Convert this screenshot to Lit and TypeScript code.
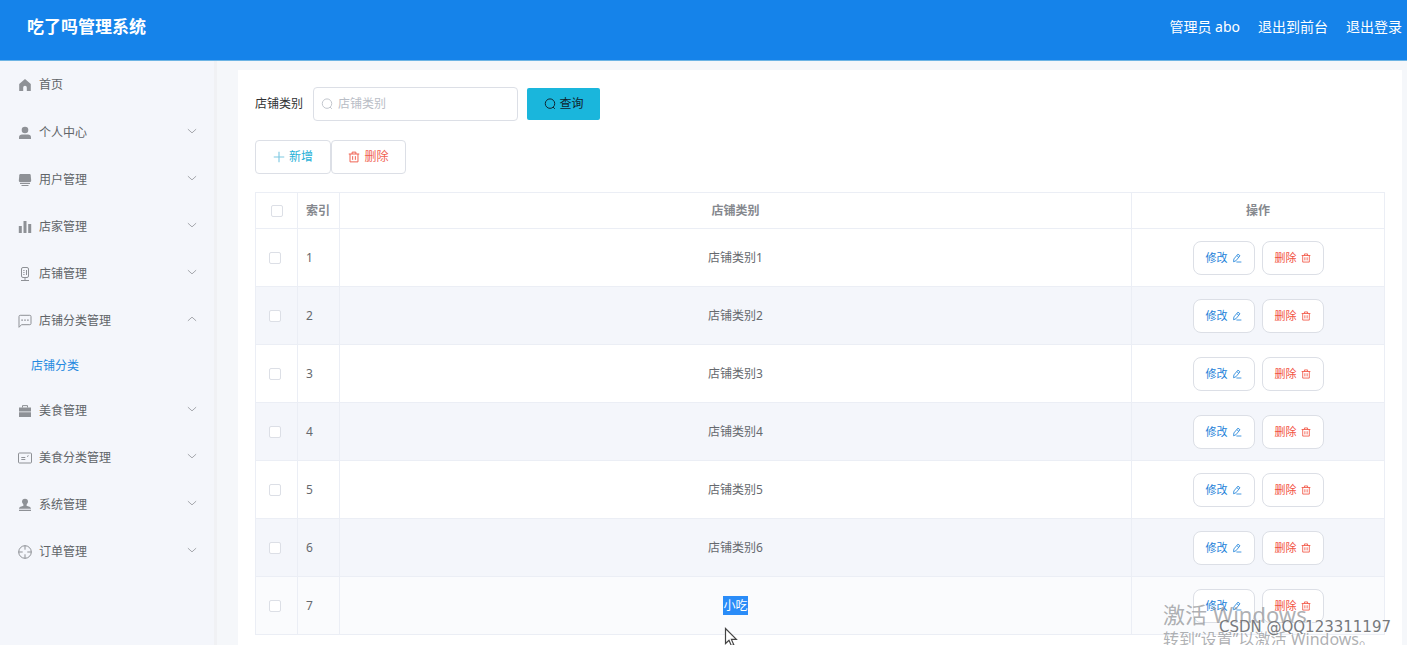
import { LitElement, html, css, svg, nothing } from "lit";
import { customElement, property, state } from "lit/decorators.js";
import { classMap } from "lit/directives/class-map.js";

const glyphs: Record<string, unknown> = {
  home: svg`<path d="M8 2 2.200 7v7h4v-3.400a1.800 1.800 0 0 1 3.600 0V14h4V7z" fill="currentColor"/>`,
  user: svg`<circle cx="8" cy="5" r="3.3" fill="currentColor"/><path d="M2 14v-1.600C2 10.500 3.400 9.600 5 9.600h6c1.600 0 3 .9 3 2.800V14z" fill="currentColor"/>`,
  goods: svg`<path d="M3.600 2h8.800c.8 0 1.200.4 1.300 1.200L14.200 8.500c0 1-.6 1.700-1.600 1.700H3.400c-1 0-1.600-.7-1.600-1.700l.5-5.300C2.400 2.400 2.800 2 3.600 2z" fill="currentColor"/><path d="M3 11.100h10v1H3zM4.500 13h7v1h-7z" fill="currentColor"/>`,
  bars: svg`<path d="M1.800 7h3v7h-3zM6.500 2h3v12h-3zM11.200 5h3v9h-3z" fill="currentColor"/>`,
  mic: svg`<rect x="4.500" y="1.500" width="7" height="10" rx="1.500" fill="none" stroke="currentColor"/><path d="M8 12v2.500M4 14.500h8M6.300 4.500h1.200M6.300 6.500h1.200M6.300 8.500h1.200M9.500 4v5" fill="none" stroke="currentColor"/>`,
  chat: svg`<path d="M2 14.300V3.500c0-.8.500-1.200 1.200-1.200h9.600c.8 0 1.200.5 1.200 1.200v7c0 .8-.5 1.200-1.200 1.200H4.500z" fill="none" stroke="currentColor"/><path d="M4.300 6.500h1.600v1.200H4.300zM7.200 6.500h1.600v1.200H7.200zM10.100 6.500h1.600v1.200h-1.600z" fill="currentColor"/>`,
  bag: svg`<path d="M5.500 4.500V2.600h5v1.900" fill="none" stroke="currentColor"/><path d="M2 4.500h12v4H2zM2 9.300h12V14H2z" fill="currentColor"/>`,
  card: svg`<rect x="1.500" y="3" width="13" height="10" rx="1" fill="none" stroke="currentColor"/><path d="M4.300 7.500h4M4.300 9.500h4M10 6.500l1.600-.8" fill="none" stroke="currentColor"/>`,
  stamp: svg`<path d="M8 1.800a3 3 0 0 1 3 3c0 1.500-1.500 2-1.500 3.700 0 .8 4.500.8 4.500 3.200H2c0-2.400 4.500-2.400 4.500-3.200C6.500 6.800 5 6.300 5 4.800a3 3 0 0 1 3-3zM2 12.700h12v1.200H2z" fill="currentColor"/>`,
  aim: svg`<circle cx="8" cy="8" r="6.300" fill="none" stroke="currentColor"/><path d="M8 1.700v4M8 10.300v4M1.700 8h4M10.300 8h4" fill="none" stroke="currentColor"/>`,
  down: svg`<path d="M2.500 5.500 8 10.500l5.500-5" fill="none" stroke="currentColor" stroke-width="1.300"/>`,
  up: svg`<path d="M2.500 10.500 8 5.500l5.500 5" fill="none" stroke="currentColor" stroke-width="1.300"/>`,
  search: svg`<circle cx="8" cy="7.500" r="6.300" fill="none" stroke="currentColor" stroke-width="1.300"/><path d="m12 12 2.500 2.500" stroke="currentColor" stroke-width="1.300"/>`,
  plus: svg`<path d="M8 1v14M1 8h14" stroke="currentColor" stroke-width="1.500"/>`,
  trash: svg`<path d="M1 4h14M5.500 4V1.500h5V4M2.700 4v10.500h10.600V4M6.200 6.800v5M9.800 6.800v5" fill="none" stroke="currentColor" stroke-width="1.300"/>`,
  edit: svg`<path d="M3 9.500 9.500 1.800l3.300 2.600-6.500 8L2.500 14zM7.800 4.200l3 2.500M7 14.400h8" fill="none" stroke="currentColor" stroke-width="1.300"/>`,
};

@customElement("ui-icon")
class UiIcon extends LitElement {
  @property() name = "";
  static styles = css`
    :host { display: inline-flex; flex: none; width: 16px; height: 16px; }
    svg { width: 100%; height: 100%; display: block; }
  `;
  render() {
    return html`<svg viewBox="0 0 16 16" aria-hidden="true">${glyphs[this.name]}</svg>`;
  }
}

interface MenuEntry { icon: string; label: string; leaf?: boolean; children?: string[] }

const menu: MenuEntry[] = [
  { icon: "home", label: "首页", leaf: true },
  { icon: "user", label: "个人中心" },
  { icon: "goods", label: "用户管理" },
  { icon: "bars", label: "店家管理" },
  { icon: "mic", label: "店铺管理" },
  { icon: "chat", label: "店铺分类管理", children: ["店铺分类"] },
  { icon: "bag", label: "美食管理" },
  { icon: "card", label: "美食分类管理" },
  { icon: "stamp", label: "系统管理" },
  { icon: "aim", label: "订单管理" },
];

@customElement("side-menu")
class SideMenu extends LitElement {
  @state() private open = "店铺分类管理";
  static styles = css`
    :host { display: block; background: #f4f6fb; border-right: 3px solid #f0f1f4; }
    ul { list-style: none; margin: 0; padding: 0; }
    .item {
      display: flex; align-items: center; gap: 6px; width: 100%; height: 47px; box-sizing: border-box;
      padding: 0 16px 0 17px; border: 0; background: none; font: inherit; color: #606468;
      text-decoration: none; text-align: left; cursor: pointer;
    }
    .leaf { margin-bottom: 1px; }
    .icon { color: #8e9196; }
    .label { flex: 1; }
    .arrow { width: 12px; height: 12px; color: #a3a6ab; padding-bottom: 3px; }
    .sub { display: flex; align-items: center; height: 43px; padding-left: 31px; color: #2589e0; text-decoration: none; }
  `;
  private toggle(label: string) {
    this.open = this.open === label ? "" : label;
  }
  render() {
    return html`<nav><ul>${menu.map((m) => {
      const opened = !!m.children && this.open === m.label;
      const body = html`<ui-icon class="icon" name=${m.icon}></ui-icon><span class="label">${m.label}</span>`;
      return html`<li>
        ${m.leaf
          ? html`<a class="item leaf" href="#home">${body}</a>`
          : html`<button class="item" aria-expanded=${opened} @click=${() => this.toggle(m.label)}>
              ${body}<ui-icon class="arrow" name=${opened ? "up" : "down"}></ui-icon>
            </button>`}
        ${opened ? m.children!.map((c) => html`<a class="sub" href="#category">${c}</a>`) : nothing}
      </li>`;
    })}</ul></nav>`;
  }
}

const categories = ["店铺类别1", "店铺类别2", "店铺类别3", "店铺类别4", "店铺类别5", "店铺类别6", "小吃"];

@customElement("category-table")
class CategoryTable extends LitElement {
  static styles = css`
    :host { display: block; }
    table { width: 100%; table-layout: fixed; border-collapse: collapse; color: #66696e; }
    th, td { border: 1px solid #ebeef5; padding: 0; text-align: center; box-sizing: border-box; }
    th { height: 36px; color: #85888e; font-weight: 700; }
    td { height: 58px; }
    .check, .index { width: 42px; }
    .pick { padding-right: 3px; }
    .index { text-align: left; padding-left: 8px; }
    .ops { width: 253px; }
    .striped { background: #f4f6fb; }
    .hover { background: #fafbfd; }
    .picked { background: #2a8cf8; color: #fff; padding: 1px 0; }
    input {
      appearance: none; display: block; width: 12px; height: 12px; margin: 0 auto; box-sizing: border-box;
      border: 1px solid #dcdfe6; border-radius: 2px; background: #fff;
    }
    input:checked { background: #409eff; }
    .actions { display: flex; justify-content: center; gap: 7px; }
    button {
      display: flex; align-items: center; justify-content: center; gap: 4px; width: 62px; height: 34px; padding: 0;
      border: 1px solid #dcdfe6; border-radius: 8px; background: #fff; font: inherit; font-size: 11px; cursor: pointer;
    }
    .edit { color: #1a80d9; }
    .remove { color: #f2503f; }
    ui-icon { width: 10px; height: 10px; }
  `;
  render() {
    return html`<table>
      <thead><tr>
        <th class="check"><input type="checkbox" aria-label="全选" /></th>
        <th class="index">索引</th><th>店铺类别</th><th class="ops">操作</th>
      </tr></thead>
      <tbody>${categories.map((name, i) => {
        const last = i === categories.length - 1;
        return html`<tr class=${classMap({ striped: i % 2 === 1, hover: last })}>
          <td class="pick"><input type="checkbox" aria-label=${name} /></td>
          <td class="index">${i + 1}</td>
          <td><span class=${classMap({ picked: last })}>${name}</span></td>
          <td><div class="actions">
            <button class="edit">修改<ui-icon name="edit"></ui-icon></button>
            <button class="remove">删除<ui-icon name="trash"></ui-icon></button>
          </div></td>
        </tr>`;
      })}</tbody>
    </table>`;
  }
}

@customElement("app-root")
class AppRoot extends LitElement {
  static styles = css`
    :host {
      display: flex; flex-direction: column; position: relative; height: 100vh; overflow: hidden;
      font: 12px/18px "Noto Sans", "Noto Sans CJK SC", sans-serif; color: #303133; background: #f5f7fa;
    }
    header {
      display: flex; align-items: center; justify-content: space-between; flex: none; box-sizing: border-box;
      height: 61px; padding: 0 5px 6px 27px; background: #1583ea; border-bottom: 1px solid #6db4e4; color: #fff;
    }
    h1 { margin: 0; font-size: 17px; line-height: 24px; font-weight: 700; }
    .account { display: flex; gap: 18px; font-size: 14px; line-height: 20px; }
    .account a { color: inherit; text-decoration: none; }
    .body { display: flex; flex: 1; min-height: 0; }
    side-menu { flex: none; width: 214px; }
    main { flex: 1; min-width: 0; margin: 9px 5px 0 21px; padding: 17px 17px 0; background: #fff; }
    .search { display: flex; align-items: center; gap: 9px; }
    .search label { margin-right: 1px; }
    .field {
      display: flex; align-items: center; gap: 5px; width: 205px; height: 34px; box-sizing: border-box;
      padding: 0 7px; border: 1px solid #dcdfe6; border-radius: 4px; background: #fff;
    }
    .field ui-icon { width: 12px; height: 12px; color: #c0c4cc; }
    .field input { flex: 1; min-width: 0; padding: 0; border: 0; outline: 0; background: none; font: inherit; color: inherit; }
    .field input::placeholder { color: #b9bdc6; opacity: 1; }
    button {
      display: flex; align-items: center; justify-content: center; gap: 4px; box-sizing: border-box;
      padding: 0; font: inherit; cursor: pointer;
    }
    button ui-icon { width: 12px; height: 12px; }
    .query { width: 73px; height: 32px; border: 0; border-radius: 2px; background: #1ab6dc; color: #10222c; }
    .tools { display: flex; margin: 19px 0 18px; }
    .tools button { height: 34px; width: 75px; border: 1px solid #dcdfe6; border-radius: 4px; background: #fff; }
    .tools .add { width: 76px; color: #1fb1d8; }
    .tools .add ui-icon { color: #7fc9e2; }
    .tools .remove { color: #f0604f; }
    .activate { position: absolute; left: calc(100% - 244px); bottom: -5px; color: rgba(140, 142, 146, 0.7); white-space: nowrap; pointer-events: none; }
    .activate strong { display: block; font-weight: 400; font-size: 22px; line-height: 28px; }
    .activate span { display: block; font-size: 16px; line-height: 22px; }
    .credit {
      position: absolute; right: 16px; bottom: 8px; font: 15px/20px "DejaVu Sans", sans-serif;
      color: #77797d; text-shadow: 1px 1px 0 #fff; pointer-events: none;
    }
    .pointer { position: absolute; left: 724px; top: 627px; width: 14px; height: 21px; pointer-events: none; }
  `;
  render() {
    return html`
      <header>
        <h1>吃了吗管理系统</h1>
        <div class="account"><span>管理员 abo</span><a href="#front">退出到前台</a><a href="#logout">退出登录</a></div>
      </header>
      <div class="body">
        <side-menu></side-menu>
        <main>
          <form class="search" @submit=${(e: Event) => e.preventDefault()}>
            <label for="category">店铺类别</label>
            <div class="field"><ui-icon name="search"></ui-icon><input id="category" type="text" placeholder="店铺类别" /></div>
            <button class="query"><ui-icon name="search"></ui-icon>查询</button>
          </form>
          <div class="tools">
            <button class="add"><ui-icon name="plus"></ui-icon>新增</button>
            <button class="remove"><ui-icon name="trash"></ui-icon>删除</button>
          </div>
          <category-table></category-table>
        </main>
      </div>
      <div class="activate"><strong>激活 Windows</strong><span>转到“设置”以激活 Windows。</span></div>
      <div class="credit">CSDN @QQ123311197</div>
      <svg class="pointer" viewBox="0 0 14 21" aria-hidden="true">
        <path d="M1.500 1.500v15l3.500-3.300 2.400 5.600 2.400-1-2.400-5.400h5z" fill="#fff" stroke="#444" stroke-width="1.200"/>
      </svg>
    `;
  }
}
